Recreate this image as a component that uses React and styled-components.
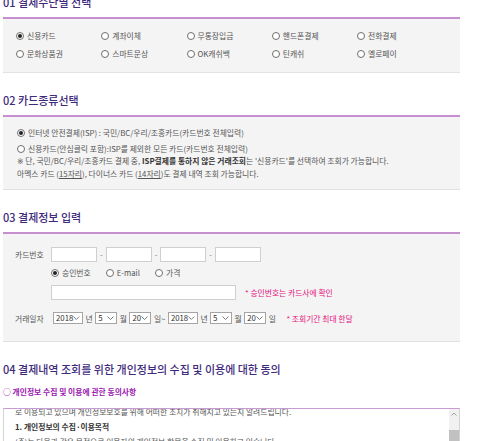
import React from 'react';
import styled, { createGlobalStyle } from 'styled-components';

const GlobalStyle = createGlobalStyle`
  html, body {
    margin: 0;
    padding: 0;
    overflow: hidden;
    background: #fff;
  }
  body {
    font-family: "Noto Sans CJK KR", "Noto Sans", sans-serif;
    color: #555;
    font-size: 7.8px;
  }
`;

const methods = [
    '신용카드', '계좌이체', '무통장입금', '핸드폰결제', '전화결제',
    '문화상품권', '스마트문상', 'OK캐쉬백', '틴캐쉬', '옐로페이',
];

const Page = styled.div`
  width: 457px;
  margin: -5px 0 0 3px;
`;

const Section = styled.section`
  margin-bottom: 20px;
`;

const Title = styled.h2`
  margin: 0;
  font-size: 11px;
  line-height: 14px;
  font-weight: 500;
  color: #3e2a7c;
  white-space: nowrap;
  padding-bottom: ${p => (p.$plain ? '0' : '8px')};
  border-bottom: ${p => (p.$plain ? 'none' : '2px solid #c58fd0')};
`;

const Panel = styled.div`
  background: #f4f4f4;
  border-bottom: 1px solid #e2e2e2;
`;

const MethodGrid = styled.div`
  display: grid;
  grid-template-columns: repeat(5, 85.25px);
  grid-auto-rows: 18px;
  align-items: center;
  padding: 8px 0 9px 13px;
`;

const Option = styled.label`
  display: flex;
  align-items: center;
  gap: 3px;
  line-height: 12px;
  white-space: nowrap;
`;

const RadioMark = styled.span`
  flex: none;
  width: 8px;
  height: 8px;
  box-sizing: border-box;
  border: 1px solid #6f6f6f;
  border-radius: 50%;
  background: #fff;
  display: flex;
  align-items: center;
  justify-content: center;
  &::after {
    content: '';
    width: 4px;
    height: 4px;
    border-radius: 50%;
    background: ${p => (p.$checked ? '#222' : 'transparent')};
  }
`;

const CardTypes = styled.div`
  padding: 10px 0 9px 14px;
  line-height: 12px;
`;

const Spaced = styled.div`
  margin-top: ${p => p.$top || 0}px;
`;

const Note = styled.p`
  margin: 0;
  line-height: 12px;
  white-space: nowrap;
  b { color: #333; }
  u { text-underline-offset: 1px; }
`;

const Mark = styled.span`
  font-family: "DejaVu Sans", sans-serif;
  font-variant-emoji: text;
  color: #555;
`;

const Form = styled.div`
  padding: 13px 0 17px 12px;
`;

const FormRow = styled.div`
  display: grid;
  grid-template-columns: 36px 1fr;
  align-items: center;
  margin-top: ${p => p.$top || 0}px;
`;

const Label = styled.span`
  color: #555;
  white-space: nowrap;
`;

const Fields = styled.div`
  display: flex;
  align-items: center;
  white-space: nowrap;
`;

const TextBox = styled.span`
  display: block;
  flex: none;
  width: ${p => p.$w}px;
  height: 15px;
  box-sizing: border-box;
  border: 1px solid #cfcfcf;
  background: #fff;
`;

const Dash = styled.span`
  width: 8.7px;
  text-align: center;
  color: #777;
`;

const Radios = styled.div`
  display: flex;
  align-items: center;
  gap: 15px;
  height: 12px;
`;

const Hint = styled.span`
  color: #e4127f;
  margin-left: ${p => p.$left}px;
  white-space: nowrap;
`;

const Select = styled.span`
  flex: none;
  display: inline-flex;
  align-items: center;
  justify-content: space-between;
  width: ${p => p.$w}px;
  height: 12px;
  box-sizing: border-box;
  border: 1px solid #a5a5a5;
  background: #fff;
  padding: 0 2px;
  color: #333;
  line-height: 10px;
`;

const Unit = styled.span`
  padding: 0 2.5px;
  color: #555;
`;

const DateFields = styled(Fields)`
  margin-left: 2px;
`;

const Sub = styled.p`
  margin: 10px 0 0;
  line-height: 12px;
  font-weight: 700;
  color: #9c16b0;
  white-space: nowrap;
`;

const ScrollBox = styled.div`
  margin-top: 10px;
  height: 60px;
  display: flex;
  border-top: 1px solid #c99ad3;
  border-left: 1px solid #d4d4d4;
  border-right: 1px solid #d4d4d4;
  background: #fff;
`;

const ScrollText = styled.div`
  flex: 1;
  overflow: hidden;
  padding-left: 11px;
  color: #555;
  line-height: 15px;
  white-space: nowrap;
`;

const Scrolled = styled.div`
  margin-top: -5px;
  p { margin: 0; }
  b { color: #333; }
`;

const ScrollBar = styled.div`
  width: 10px;
  flex: none;
  background: #f1f1f1;
  display: flex;
  flex-direction: column;
  align-items: center;
`;

const ScrollArrow = styled.div`
  height: 11px;
  display: flex;
  align-items: center;
`;

const Thumb = styled.div`
  margin-top: 10px;
  width: 10px;
  height: 40px;
  background: #c1c1c1;
`;

function Radio({ checked, children }) {
    return (
        <Option>
            <RadioMark $checked={checked} />
            <span>{children}</span>
        </Option>
    );
}

function Chevron() {
    return (
        <svg width="7" height="4" viewBox="0 0 7 4">
            <polyline points="0.5,0.5 3.5,3.5 6.5,0.5" fill="none" stroke="#555" strokeWidth="0.8" />
        </svg>
    );
}

function Dropdown({ w, value }) {
    return (
        <Select $w={w}>
            <span>{value}</span>
            <Chevron />
        </Select>
    );
}

export default function App() {
    return (
        <>
            <GlobalStyle />
            <Page>
                <Section>
                    <Title>01 결제수단별 선택</Title>
                    <Panel>
                        <MethodGrid>
                            {methods.map((m, i) => (
                                <Radio key={m} checked={i === 0}>{m}</Radio>
                            ))}
                        </MethodGrid>
                    </Panel>
                </Section>

                <Section>
                    <Title>02 카드종류선택</Title>
                    <Panel>
                        <CardTypes>
                            <Radio checked>인터넷 안전결제(ISP) : 국민/BC/우리/조흥카드(카드번호 전체입력)</Radio>
                            <Spaced $top={4}>
                                <Radio>신용카드(안심클릭 포함):ISP를 제외한 모든 카드(카드번호 전체입력)</Radio>
                            </Spaced>
                            <Note><Mark>※</Mark> 단, 국민/BC/우리/조흥카드 결제 중, <b>ISP결제를 통하지 않은 거래조회</b>는 '신용카드'를 선택하여 조회가 가능합니다.</Note>
                            <Note>아멕스 카드 (<u>15자리</u>), 다이너스 카드 (<u>14자리</u>)도 결제 내역 조회 가능합니다.</Note>
                        </CardTypes>
                    </Panel>
                </Section>

                <Section>
                    <Title>03 결제정보 입력</Title>
                    <Panel>
                        <Form>
                            <FormRow>
                                <Label>카드번호</Label>
                                <Fields>
                                    <TextBox $w={46} />
                                    <Dash>-</Dash>
                                    <TextBox $w={46} />
                                    <Dash>-</Dash>
                                    <TextBox $w={46} />
                                    <Dash>-</Dash>
                                    <TextBox $w={46} />
                                </Fields>
                            </FormRow>
                            <FormRow $top={5}>
                                <span />
                                <Radios>
                                    <Radio checked>승인번호</Radio>
                                    <Radio>E-mail</Radio>
                                    <Radio>가격</Radio>
                                </Radios>
                            </FormRow>
                            <FormRow $top={6}>
                                <span />
                                <Fields>
                                    <TextBox $w={185} />
                                    <Hint $left={9}>* 승인번호는 카드사에 확인</Hint>
                                </Fields>
                            </FormRow>
                            <FormRow $top={12}>
                                <Label>거래일자</Label>
                                <DateFields>
                                    <Dropdown w={30} value="2018" />
                                    <Unit>년</Unit>
                                    <Dropdown w={22} value="5" />
                                    <Unit>월</Unit>
                                    <Dropdown w={22} value="20" />
                                    <Unit>일~</Unit>
                                    <Dropdown w={30} value="2018" />
                                    <Unit>년</Unit>
                                    <Dropdown w={22} value="5" />
                                    <Unit>월</Unit>
                                    <Dropdown w={22} value="20" />
                                    <Unit>일</Unit>
                                    <Hint $left={8}>* 조회기간 최대 한달</Hint>
                                </DateFields>
                            </FormRow>
                        </Form>
                    </Panel>
                </Section>

                <section>
                    <Title $plain>04 결제내역 조회를 위한 개인정보의 수집 및 이용에 대한 동의</Title>
                    <Sub>○ 개인정보 수집 및 이용에 관한 동의사항</Sub>
                    <ScrollBox>
                        <ScrollText>
                            <Scrolled>
                                <p>로 이용되고 있으며 개인정보보호를 위해 어떠한 조치가 취해지고 있는지 알려드립니다.</p>
                                <p><b>1. 개인정보의 수집·이용목적</b></p>
                                <p>(주)는 다음과 같은 목적으로 이용자의 개인정보 항목을 수집 및 이용하고 있습니다.</p>
                            </Scrolled>
                        </ScrollText>
                        <ScrollBar>
                            <ScrollArrow>
                                <svg width="6" height="4" viewBox="0 0 6 4">
                                    <polyline points="0.5,3.5 3,1 5.5,3.5" fill="none" stroke="#8a8a8a" strokeWidth="0.8" />
                                </svg>
                            </ScrollArrow>
                            <Thumb />
                        </ScrollBar>
                    </ScrollBox>
                </section>
            </Page>
        </>
    );
}
